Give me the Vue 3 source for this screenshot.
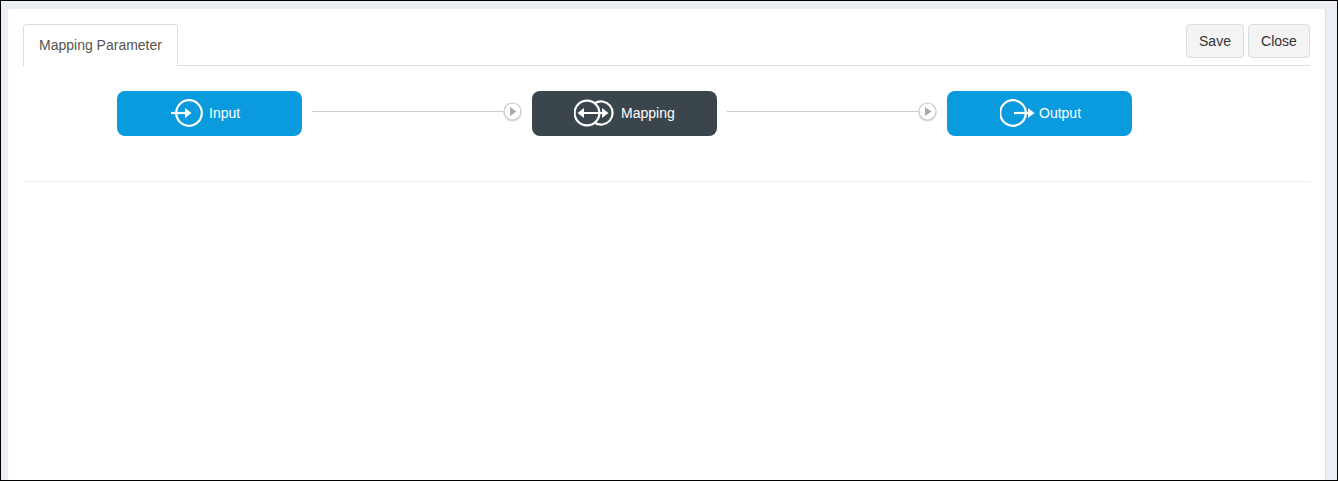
<script setup>
const flowSteps = [
  { id: 'input', label: 'Input', dark: false },
  { id: 'mapping', label: 'Mapping', dark: true },
  { id: 'output', label: 'Output', dark: false },
]
</script>

<template>
  <div class="screen">
    <section class="panel">
      <header class="panel__head">
        <div class="panel__tab">Mapping Parameter</div>
        <div class="panel__actions">
          <button type="button" class="panel__btn panel__btn--save">Save</button>
          <button type="button" class="panel__btn panel__btn--close">Close</button>
        </div>
      </header>

      <div class="flow">
        <template v-for="(step, index) in flowSteps" :key="step.id">
          <div class="flow__node" :class="['flow__node--' + step.id, { 'flow__node--dark': step.dark }]">
            <svg v-if="step.id === 'input'" class="flow__icon" width="38" height="30" viewBox="0 0 38 30">
              <circle cx="18" cy="15" r="12.8" fill="none" stroke="#fff" stroke-width="2.2" />
              <path d="M0 15H16" stroke="#fff" stroke-width="2.2" fill="none" />
              <path d="M14 10L20.5 15L14 20Z" fill="#fff" />
            </svg>
            <svg v-else-if="step.id === 'mapping'" class="flow__icon" width="47" height="30" viewBox="0 0 47 30">
              <circle cx="13" cy="15" r="12.4" fill="none" stroke="#fff" stroke-width="2.2" />
              <path d="M20.69 5.27A11.6 11.6 0 1 1 20.69 24.73" fill="none" stroke="#fff" stroke-width="2.2" />
              <path d="M8 15H30" stroke="#fff" stroke-width="2" fill="none" />
              <path d="M10 10L3.5 15L10 20Z" fill="#fff" />
              <path d="M28 10L34.5 15L28 20Z" fill="#fff" />
            </svg>
            <svg v-else class="flow__icon" width="39" height="30" viewBox="0 0 39 30">
              <circle cx="13" cy="15" r="12.8" fill="none" stroke="#fff" stroke-width="2.2" />
              <path d="M14 15H30" stroke="#fff" stroke-width="2.2" fill="none" />
              <path d="M28 10L34.5 15L28 20Z" fill="#fff" />
            </svg>
            <span class="flow__label">{{ step.label }}</span>
          </div>

          <div v-if="index < flowSteps.length - 1" class="flow__link">
            <span class="flow__line"></span>
            <svg class="flow__play" width="19" height="19" viewBox="0 0 19 19">
              <circle cx="9.5" cy="9.5" r="8.5" fill="#fff" stroke="#ccc" stroke-width="1.2" />
              <path d="M7 5L13.5 9.5L7 14Z" fill="#aaa" />
            </svg>
          </div>
        </template>
      </div>

      <div class="panel__rule"></div>
    </section>
  </div>
</template>

<style>
html,
body {
  margin: 0;
  overflow: hidden;
}
</style>

<style scoped>
.screen {
  box-sizing: border-box;
  height: 481px;
  padding: 7px 11px 0 6px;
  background: #ebeff4;
  border: 1px solid #000;
  overflow: hidden;
  font-family: "Liberation Sans", Arial, sans-serif;
  font-size: 14px;
}

.panel {
  box-sizing: border-box;
  height: 480px;
  padding: 15px 15px 0 15px;
  background: #fff;
  border: 1px solid #ddd;
  border-left-color: #eee;
  border-top-color: #eee;
  border-radius: 4px;
}

.panel__head {
  display: flex;
  justify-content: space-between;
  height: 42px;
  border-bottom: 1px solid #ddd;
  box-sizing: border-box;
}

.panel__tab {
  box-sizing: border-box;
  height: 42px;
  padding: 0 15px;
  line-height: 41px;
  color: #555;
  background: #fff;
  border: 1px solid #ddd;
  border-bottom: 0;
  border-radius: 4px 4px 0 0;
}

.panel__actions {
  display: flex;
  gap: 4px;
}

.panel__btn {
  box-sizing: border-box;
  height: 34px;
  padding: 0;
  font-family: inherit;
  font-size: 14px;
  color: #333;
  background: #f4f4f4;
  border: 1px solid #ddd;
  border-radius: 4px;
}

.panel__btn--save {
  width: 58px;
}

.panel__btn--close {
  width: 62px;
}

.flow {
  display: flex;
  padding: 25px 0 0 94px;
  height: 90px;
}

.flow__node {
  box-sizing: border-box;
  display: flex;
  align-items: center;
  width: 185px;
  height: 45px;
  color: #fff;
  background: #099bdd;
  border-radius: 8px;
}

.flow__node--dark {
  background: #3b464c;
}

.flow__node--input {
  padding-left: 54px;
}

.flow__node--mapping {
  padding-left: 42px;
}

.flow__node--output {
  padding-left: 53px;
}

.flow__icon {
  flex: none;
  margin-top: -1px;
}

.flow__label {
  margin-bottom: 2px;
}

.flow__link {
  display: flex;
  align-items: flex-start;
  width: 230px;
  box-sizing: border-box;
  padding: 11px 10px 0 10px;
}

.flow__line {
  flex: 1;
  height: 1px;
  margin-top: 9px;
  background: #ccc;
}

.flow__play {
  flex: none;
  filter: drop-shadow(0 1px 0 #ddd);
}

.panel__rule {
  height: 1px;
  margin-left: 1px;
  background: #eee;
}
</style>
